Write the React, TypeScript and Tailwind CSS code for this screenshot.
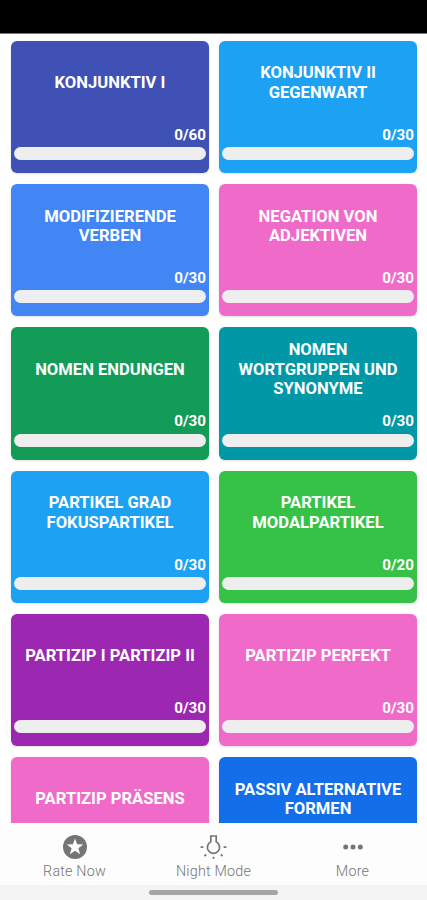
import React from 'react';

interface Topic {
  title: string[];
  total?: number;
  color: string;
}

const topics: Topic[] = [
  { title: ['KONJUNKTIV I'], total: 60, color: 'bg-[#3f51b5]' },
  { title: ['KONJUNKTIV II', 'GEGENWART'], total: 30, color: 'bg-[#1da1f2]' },
  { title: ['MODIFIZIERENDE', 'VERBEN'], total: 30, color: 'bg-[#4285f4]' },
  { title: ['NEGATION VON', 'ADJEKTIVEN'], total: 30, color: 'bg-[#f06bc9]' },
  { title: ['NOMEN ENDUNGEN'], total: 30, color: 'bg-[#129c57]' },
  { title: ['NOMEN', 'WORTGRUPPEN UND', 'SYNONYME'], total: 30, color: 'bg-[#0097a7]' },
  { title: ['PARTIKEL GRAD', 'FOKUSPARTIKEL'], total: 30, color: 'bg-[#1da1f2]' },
  { title: ['PARTIKEL', 'MODALPARTIKEL'], total: 20, color: 'bg-[#36c246]' },
  { title: ['PARTIZIP I PARTIZIP II'], total: 30, color: 'bg-[#9c27b0]' },
  { title: ['PARTIZIP PERFEKT'], total: 30, color: 'bg-[#f06bc9]' },
  { title: ['PARTIZIP PRÄSENS'], color: 'bg-[#f06bc9]' },
  { title: ['PASSIV ALTERNATIVE', 'FORMEN'], color: 'bg-[#136eea]' },
];

const TopicCard: React.FC<{ topic: Topic }> = ({ topic }) => {
  return (
    <div className={`flex h-[132.4px] flex-col rounded-md px-[3px] text-white shadow-sm ${topic.color}`}>
      <div className="flex h-[84px] shrink-0 flex-col items-center justify-center text-[16.6px] leading-[19.2px] font-bold">
        {topic.title.map((line) => (
          <p key={line} className="whitespace-nowrap">{line}</p>
        ))}
      </div>
      {topic.total && (
        <>
          <p className="h-[22.5px] text-right text-[15.2px] leading-5 font-bold">0/{topic.total}</p>
          <div className="h-[13px] rounded-full bg-[#eeeeee]" />
        </>
      )}
    </div>
  );
};

const StarIcon = () => (
  <svg className="h-6 w-6" viewBox="0 0 24 24">
    <circle cx="12" cy="12" r="12" fill="#757575" />
    <path d="M12 3.5l2.1 5.8 6.1.2-4.8 3.8 1.7 5.9-5.1-3.4-5.1 3.4 1.7-5.9-4.8-3.8 6.1-.2z" fill="#fff" />
  </svg>
);

const BulbIcon = () => (
  <svg className="h-6 w-[27px]" viewBox="0 0 27 24" fill="none" stroke="#757575" strokeWidth="1.7">
    <path d="M10.8 1h5.4v5.8a6.1 6.1 0 1 1-5.4 0z" />
    <path d="M.6 12.2h2.8M23.6 12.2h2.8M13.5 21.8v2.2M4.4 21.1l1.8-1.6M22.6 21.1l-1.8-1.6" />
  </svg>
);

const DotsIcon = () => (
  <svg className="h-6 w-6" viewBox="0 0 24 24" fill="#757575">
    <circle cx="4.7" cy="12" r="2.5" />
    <circle cx="12" cy="12" r="2.5" />
    <circle cx="19.3" cy="12" r="2.5" />
  </svg>
);

const tabs = [
  { label: 'Rate Now', icon: <StarIcon /> },
  { label: 'Night Mode', icon: <BulbIcon /> },
  { label: 'More', icon: <DotsIcon /> },
];

const App: React.FC = () => {
  return (
    <div className="flex h-[900px] w-[427px] flex-col overflow-hidden bg-white font-['Roboto',sans-serif]">
      <div className="h-[34px] shrink-0 border-b border-[#777777] bg-black" />

      <main className="min-h-0 flex-1 overflow-hidden pt-[6.7px] pr-[10px] pl-[11px]">
        <div className="grid grid-cols-2 gap-x-[10px] gap-y-[10.9px]">
          {topics.map((topic) => (
            <TopicCard key={topic.title.join(' ')} topic={topic} />
          ))}
        </div>
      </main>

      <nav className="grid h-[62px] shrink-0 grid-cols-3 bg-[#fdfdfd] px-[5px] pt-3">
        {tabs.map((tab) => (
          <button key={tab.label} type="button" className="flex flex-col items-center text-[#757575]">
            {tab.icon}
            <span className="mt-[2px] text-[14.3px] leading-5 font-light tracking-[0.2px]">{tab.label}</span>
          </button>
        ))}
      </nav>

      <div className="flex h-[15px] shrink-0 justify-center bg-[#f4f4f4] pt-[5px]">
        <div className="h-[5px] w-[129px] rounded-full bg-[#a5a5a5]" />
      </div>
    </div>
  );
};

export default App;
